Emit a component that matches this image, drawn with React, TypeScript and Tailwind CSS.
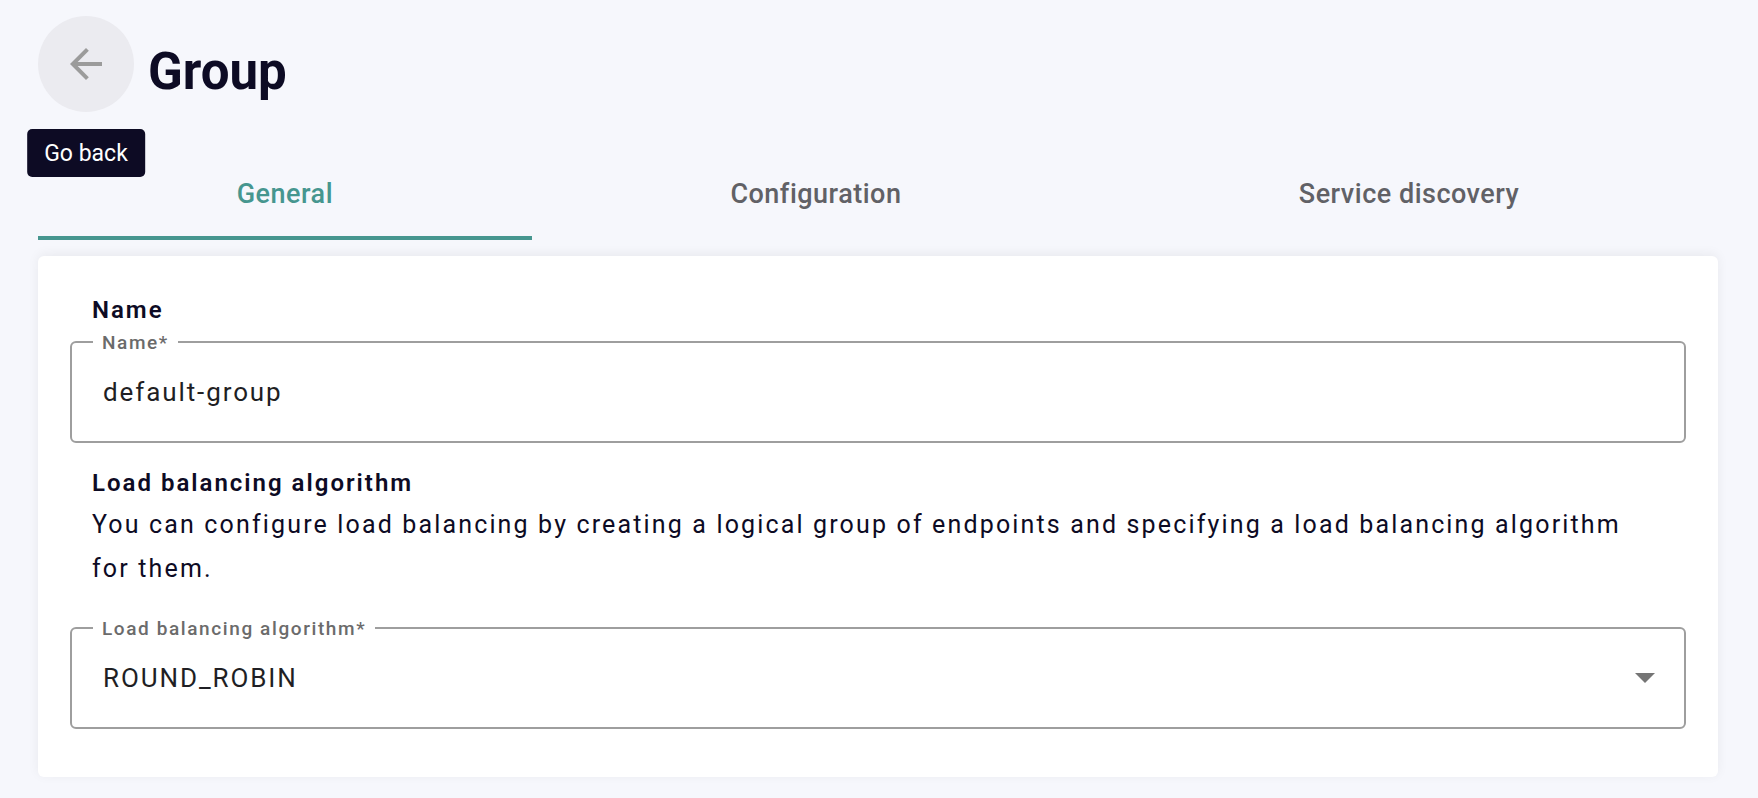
import * as React from 'react';

const tabs = ['General', 'Configuration', 'Service discovery'];

function BackButton() {
    return (
        <div className="relative shrink-0">
            <button className="w-24 h-24 rounded-full bg-[#ebebf0] flex items-center justify-center">
                <svg width="48" height="48" viewBox="0 0 24 24" className="fill-[#9b9b9b]">
                    <path d="M20 11H7.83l5.59-5.59L12 4l-8 8 8 8 1.41-1.41L7.83 13H20v-2z" />
                </svg>
            </button>
            {/* tooltip under the button */}
            <div className="absolute top-full left-1/2 -translate-x-1/2 mt-[17px] rounded-[5px] bg-[#0d0b24] h-12 pt-[3px] px-[17px] flex items-center whitespace-nowrap text-[23px] text-white">
                Go back
            </div>
        </div>
    );
}

function OutlinedField({ label, value, select = false, className = '' }: { label: string; value: string; select?: boolean; className?: string }) {
    return (
        <div className={'relative h-[102px] rounded-[6px] border-2 border-[#9e9e9e] flex items-center pl-[31px] pr-[29px] ' + className}>
            <span className="absolute left-[21px] top-[-1px] -translate-y-1/2 bg-white px-[9px] text-[19px] leading-none tracking-[1.6px] text-[#6b6b6b] font-medium">
                {label}
            </span>
            <span className="flex-1 text-[26px] tracking-[1.9px] text-[#1f1f24]">{value}</span>
            {select && (
                <svg width="20" height="10" viewBox="0 0 20 10" className="fill-[#757575]">
                    <polygon points="0,0 20,0 10,10" />
                </svg>
            )}
        </div>
    );
}

export default function App() {
    return (
        <div className="min-h-screen bg-[#f6f7fc] pl-[38px] pr-[40px] pt-4 font-['Roboto',sans-serif] text-[#0d0b24]">
            {/* header */}
            <div className="flex items-start gap-[14px]">
                <BackButton />
                <h1 className="mt-[30px] text-[51px] leading-[52px] font-bold">Group</h1>
            </div>

            {/* tabs */}
            <div className="mt-8 flex h-24">
                {tabs.map((tab, i) => (
                    <div
                        key={tab}
                        className={
                            'relative flex-auto flex items-center justify-center pt-1 text-[27px] leading-8 font-medium tracking-[0.5px] ' +
                            (i === 0 ? 'text-[#46968f]' : 'text-[#616166]')
                        }
                    >
                        {tab}
                        {i === 0 && <div className="absolute bottom-0 inset-x-0 h-1 bg-[#46968f]" />}
                    </div>
                ))}
            </div>

            {/* card */}
            <div className="mt-4 rounded-[6px] bg-white px-8 pt-10 pb-12 shadow-[0_-2px_12px_rgba(0,0,0,0.06)]">
                <h2 className="px-[22px] text-[24px] leading-7 font-semibold tracking-[2px]">Name</h2>
                <OutlinedField className="mt-[17px]" label="Name*" value="default-group" />

                <h2 className="mt-[26px] px-[22px] text-[24px] leading-7 font-semibold tracking-[2px]">Load balancing algorithm</h2>
                <p className="mt-[6px] pl-[22px] pr-[40px] text-[25px] leading-[44px] tracking-[2.15px]">
                    You can configure load balancing by creating a logical group of endpoints and specifying a load balancing algorithm for them.
                </p>
                <OutlinedField className="mt-9" label="Load balancing algorithm*" value="ROUND_ROBIN" select />
            </div>
        </div>
    );
}
